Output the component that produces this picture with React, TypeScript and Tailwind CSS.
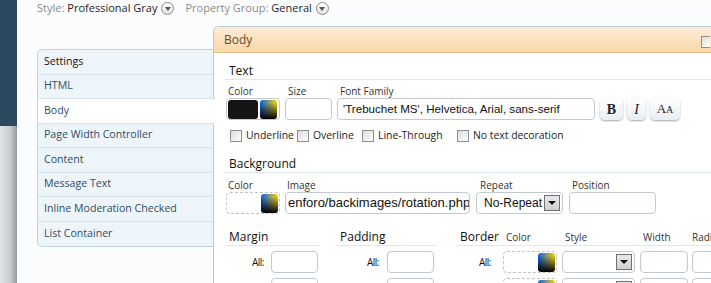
import React from "react";

const navItems = [
  "Settings",
  "HTML",
  "Body",
  "Page Width Controller",
  "Content",
  "Message Text",
  "Inline Moderation Checked",
  "List Container",
];

const inputBox = "h-[22px] shrink-0 rounded-[4px] border border-[#c3c9ce] bg-white";

const Swatch = ({ className = "" }: { className?: string }) => (
  <div
    className={`h-[19px] w-[17px] shrink-0 rounded-[3px] bg-[linear-gradient(to_bottom,rgba(0,0,0,0)_15%,#000_100%),linear-gradient(to_right,#0f5fe6,#f7d300)] ${className}`}
  />
);

const DropCircle = () => (
  <span className="ml-[4px] inline-flex h-[13px] w-[13px] items-center justify-center rounded-full border border-[#8b8b8b] bg-[linear-gradient(#ffffff,#e3e3e3)]">
    <span className="mt-[1px] h-0 w-0 border-x-[3px] border-t-[4px] border-x-transparent border-t-[#555]" />
  </span>
);

const Check = () => (
  <span className="inline-block h-[12px] w-[12px] shrink-0 border border-[#8e8f8f] bg-[linear-gradient(135deg,#dcdcdc,#ffffff)]" />
);

const Arrow = () => (
  <span className="flex h-[16px] w-[16px] shrink-0 items-center justify-center border border-[#707070] bg-[linear-gradient(#e8e8e8,#cfcfcf)]">
    <span className="h-0 w-0 border-x-[4px] border-t-[4px] border-x-transparent border-t-[#111]" />
  </span>
);

const Heading = ({ children }: { children: React.ReactNode }) => (
  <div className="h-[18px] border-b border-[#dde7ee] pl-[4px] text-[12px] leading-[17px] text-[#111]">
    {children}
  </div>
);

const Label = ({ children, className = "" }: { children: React.ReactNode; className?: string }) => (
  <div className={`h-[12px] whitespace-nowrap text-[10px] leading-[12px] text-[#333] ${className}`}>{children}</div>
);

const ColorBox = ({ filled }: { filled?: boolean }) =>
  filled ? (
    <div className={`flex w-[54px] items-center gap-[2px] px-[1px] ${inputBox} border-[#b3b9be]`}>
      <div className="h-[19px] w-[30px] rounded-[3px] bg-[#151515]" />
      <Swatch />
    </div>
  ) : (
    <div className="flex h-[22px] w-[54px] shrink-0 items-center justify-end rounded-[4px] border border-dashed border-[#bfc4c8] bg-white pr-[1px]">
      <Swatch />
    </div>
  );

const Select = ({ width, text }: { width: string; text?: string }) => (
  <div className={`flex items-center justify-between whitespace-nowrap pl-[7px] pr-[2px] text-[12px] ${inputBox} ${width}`}>
    <span className="font-['Liberation_Sans',sans-serif] text-[#111]">{text}</span>
    <Arrow />
  </div>
);

const TopBar = () => (
  <div className="flex h-[16px] items-center pl-[20px] text-[11px]">
    <span className="text-[#8c8c8c]">Style:</span>
    <span className="ml-[3px] text-[#1e1e1e]">Professional Gray</span>
    <DropCircle />
    <span className="ml-[11px] text-[#8c8c8c]">Property Group:</span>
    <span className="ml-[3px] text-[#1e1e1e]">General</span>
    <DropCircle />
  </div>
);

const Nav = () => (
  <div className="mt-[23px] w-[176px] shrink-0 self-start rounded-l-[5px] border-y border-l border-[#c3d3de] bg-[#eef5fa]">
    {navItems.map((item, i) => (
      <div
        key={item}
        className={`flex h-[24.5px] items-center pl-[6px] text-[10.6px] ${
          i < navItems.length - 1 ? "border-b border-[#d8e4ec]" : "rounded-bl-[5px]"
        } ${i === 0 ? "rounded-tl-[5px] text-[#151515]" : "text-[#2f4d63]"} ${
          item === "Body" ? "relative z-10 -mr-px bg-white" : ""
        }`}
      >
        {item}
      </div>
    ))}
  </div>
);

const Panel = () => (
  <div className="w-[498px] shrink-0 rounded-tl-[6px] border-l border-t border-[#b8c9d5] bg-white">
    <div className="flex h-[26px] items-center justify-between rounded-tl-[5px] border-b border-[#e4c08b] bg-[linear-gradient(#fdecd6,#f9d7a8)] pl-[10px] pr-[1px]">
      <span className="text-[12px] text-[#6b4a1d]">Body</span>
      <span className="mt-[4px] h-[12px] w-[9px] border-y border-l border-[#8f8f8f] bg-[linear-gradient(135deg,#dcdcdc,#ffffff)]" />
    </div>

    <div className="pl-[11px] pt-[9px]">
      <Heading>Text</Heading>
      <div className="mt-[5px] flex gap-[5px] pl-[1px]">
        <div className="shrink-0">
          <Label className="pl-[2px]">Color</Label>
          <div className="mt-[1px]">
            <ColorBox filled />
          </div>
        </div>
        <div className="shrink-0">
          <Label className="pl-[3px]">Size</Label>
          <div className={`mt-[1px] w-[47px] ${inputBox}`} />
        </div>
        <div className="shrink-0">
          <Label className="pl-[3px]">Font Family</Label>
          <div
            className={`mt-[1px] flex w-[258px] items-center whitespace-nowrap pl-[5px] font-['Liberation_Sans',sans-serif] text-[11.6px] text-[#111] ${inputBox}`}
          >
            'Trebuchet MS', Helvetica, Arial, sans-serif
          </div>
        </div>
        <div className="mt-[13px] flex shrink-0 gap-[4px] font-['Liberation_Serif',serif] text-[#222]">
          <div className="flex h-[22px] w-[23px] items-center justify-center rounded-[5px] bg-[linear-gradient(#ffffff,#e9eef2)] text-[14px] font-bold shadow-[0_1px_2px_rgba(0,0,0,0.35)]">
            B
          </div>
          <div className="flex h-[22px] w-[19px] items-center justify-center rounded-[5px] bg-[linear-gradient(#ffffff,#e9eef2)] text-[14px] italic shadow-[0_1px_2px_rgba(0,0,0,0.35)]">
            I
          </div>
          <div className="flex h-[22px] w-[30px] items-center justify-center rounded-[5px] bg-[linear-gradient(#ffffff,#e9eef2)] text-[13px] shadow-[0_1px_2px_rgba(0,0,0,0.35)]">
            A<span className="text-[10px]">A</span>
          </div>
        </div>
      </div>

      <div className="mt-[9px] flex h-[14px] items-center whitespace-nowrap pl-[5px] text-[10.4px] text-[#222]">
        <label className="flex w-[67px] shrink-0 items-center gap-[4px]">
          <Check />
          Underline
        </label>
        <label className="flex w-[65px] shrink-0 items-center gap-[4px]">
          <Check />
          Overline
        </label>
        <label className="flex w-[95px] shrink-0 items-center gap-[4px]">
          <Check />
          Line-Through
        </label>
        <label className="flex shrink-0 items-center gap-[4px]">
          <Check />
          No text decoration
        </label>
      </div>

      <div className="mt-[12px]">
        <Heading>Background</Heading>
      </div>
      <div className="mt-[6px] flex pl-[1px]">
        <div className="shrink-0">
          <Label className="pl-[2px]">Color</Label>
          <div className="mt-[1px]">
            <ColorBox />
          </div>
        </div>
        <div className="ml-[5px] shrink-0">
          <Label className="pl-[2px]">Image</Label>
          <div
            className={`mt-[1px] flex w-[185px] items-center overflow-hidden whitespace-nowrap pl-[2px] font-['Liberation_Sans',sans-serif] text-[13px] text-[#111] ${inputBox}`}
          >
            enforo/backimages/rotation.php
          </div>
        </div>
        <div className="ml-[6px] shrink-0">
          <Label className="pl-[4px]">Repeat</Label>
          <div className="mt-[1px]">
            <Select width="w-[87px]" text="No-Repeat" />
          </div>
        </div>
        <div className="ml-[6px] shrink-0">
          <Label className="pl-[3px]">Position</Label>
          <div className={`mt-[1px] w-[87px] ${inputBox}`} />
        </div>
      </div>

      <div className="mt-[14px] flex">
        <div className="w-[95px] shrink-0">
          <Heading>Margin</Heading>
          <div className="mt-[5px] flex flex-col gap-[5px]">
            <div className="flex items-center">
              <span className="w-[41px] shrink-0 pr-[2px] text-right text-[10px] tracking-[-0.5px] text-[#111]">All:</span>
              <div className={`ml-[5px] w-[47px] ${inputBox}`} />
            </div>
            <div className="flex items-center">
              <span className="w-[41px] shrink-0" />
              <div className={`ml-[5px] w-[47px] ${inputBox}`} />
            </div>
          </div>
        </div>
        <div className="ml-[16px] w-[100px] shrink-0">
          <Heading>Padding</Heading>
          <div className="mt-[5px] flex flex-col gap-[5px]">
            <div className="flex items-center">
              <span className="w-[45px] shrink-0 pr-[2px] text-right text-[10px] tracking-[-0.5px] text-[#111]">All:</span>
              <div className={`ml-[6px] w-[47px] ${inputBox}`} />
            </div>
            <div className="flex items-center">
              <span className="w-[45px] shrink-0" />
              <div className={`ml-[6px] w-[47px] ${inputBox}`} />
            </div>
          </div>
        </div>
        <div className="ml-[19px] w-[300px] shrink-0">
          <div className="flex h-[18px] items-end whitespace-nowrap border-b border-[#dde7ee] leading-[17px]">
            <span className="w-[48px] shrink-0 pl-[5px] text-[12px] text-[#111]">Border</span>
            <span className="w-[59px] shrink-0 pl-[3px] text-[10px] leading-[15px] text-[#333]">Color</span>
            <span className="w-[78px] shrink-0 pl-[3px] text-[10px] leading-[15px] text-[#333]">Style</span>
            <span className="w-[52px] shrink-0 pl-[3px] text-[10px] leading-[15px] text-[#333]">Width</span>
            <span className="shrink-0 text-[10px] leading-[15px] text-[#333]">Radius</span>
          </div>
          <div className="mt-[5px] flex flex-col gap-[5px]">
            {[0, 1].map((r) => (
              <div key={r} className="flex items-center">
                <span className="w-[38px] shrink-0 pr-[2px] text-right text-[10px] tracking-[-0.5px] text-[#111]">
                  {r === 0 ? "All:" : ""}
                </span>
                <div className="ml-[10px] shrink-0">
                  <ColorBox />
                </div>
                <div className="ml-[5px] shrink-0">
                  <Select width="w-[73px]" />
                </div>
                <div className={`ml-[5px] w-[48px] ${inputBox}`} />
                <div className={`ml-[4px] w-[48px] ${inputBox}`} />
              </div>
            ))}
          </div>
        </div>
      </div>
    </div>
  </div>
);

export default function App() {
  return (
    <div className="flex h-[283px] w-[711px] overflow-hidden bg-[#fbfcfd] font-['Open_Sans','Noto_Sans',sans-serif] text-[#222]">
      <div className="flex w-[17px] shrink-0 flex-col">
        <div className="h-[126px] bg-[#2c4a5f]" />
        <div className="flex-1 bg-[linear-gradient(to_right,#e4e6e8,#c6ccd0_60%,#8e9aa0)]" />
      </div>
      <div className="flex min-w-0 flex-1 flex-col">
        <TopBar />
        <div className="mt-[10px] flex pl-[20px]">
          <Nav />
          <Panel />
        </div>
      </div>
    </div>
  );
}
